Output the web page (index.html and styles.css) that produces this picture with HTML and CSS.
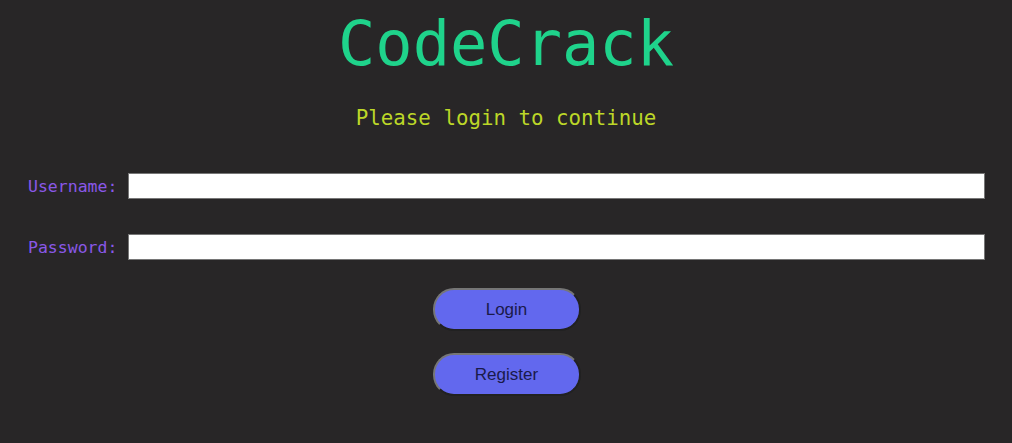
FILE: index.html
```html
<!DOCTYPE html>
<html>
<head>
<meta charset="utf-8">
<link rel="stylesheet" href="styles.css">
</head>
<body>
<main class="page">
  <h1 class="title">CodeCrack</h1>
  <p class="subtitle">Please login to continue</p>
  <form class="form">
    <div class="row">
      <label class="label" for="u">Username:</label>
      <input class="input" id="u" type="text">
    </div>
    <div class="row">
      <label class="label" for="p">Password:</label>
      <input class="input" id="p" type="password">
    </div>
    <div class="actions">
      <button class="btn" type="button">Login</button>
      <button class="btn" type="button">Register</button>
    </div>
  </form>
</main>
</body>
</html>
```
FILE: styles.css
```css
html, body {
  margin: 0;
  padding: 0;
  background: #282627;
  height: 100%;
}
.page {
  font-family: "DejaVu Sans Mono", "Liberation Mono", monospace;
  padding-top: 6px;
}
.title {
  margin: 0;
  text-align: center;
  font-family: "DejaVu Sans Mono", monospace;
  font-weight: normal;
  font-size: 62px;
  line-height: 76px;
  color: #1fd38b;
}
.subtitle {
  margin: 22px 0 0;
  text-align: center;
  font-size: 20.8px;
  line-height: 28px;
  color: #bcd728;
}
.form {
  margin-top: 41px;
  padding: 0 27px 0 28px;
}
.row {
  display: flex;
  align-items: center;
  gap: 11px;
  margin-bottom: 35px;
}
.label {
  font-size: 16.5px;
  color: #8a58e8;
  white-space: nowrap;
}
.input {
  flex: 1;
  height: 26px;
  box-sizing: border-box;
  border: 1px solid #767676;
  background: #fff;
  margin: 0;
  padding: 0;
}
.actions {
  display: flex;
  flex-direction: column;
  align-items: center;
  gap: 22px;
  margin-top: -7px;
}
.btn {
  width: 148px;
  height: 43px;
  box-sizing: border-box;
  border-radius: 21px;
  border: 2px outset #767676;
  background: #6268ee;
  color: #1a1a4a;
  font-family: "Liberation Sans", Arial, sans-serif;
  font-size: 17px;
  cursor: pointer;
}
```
